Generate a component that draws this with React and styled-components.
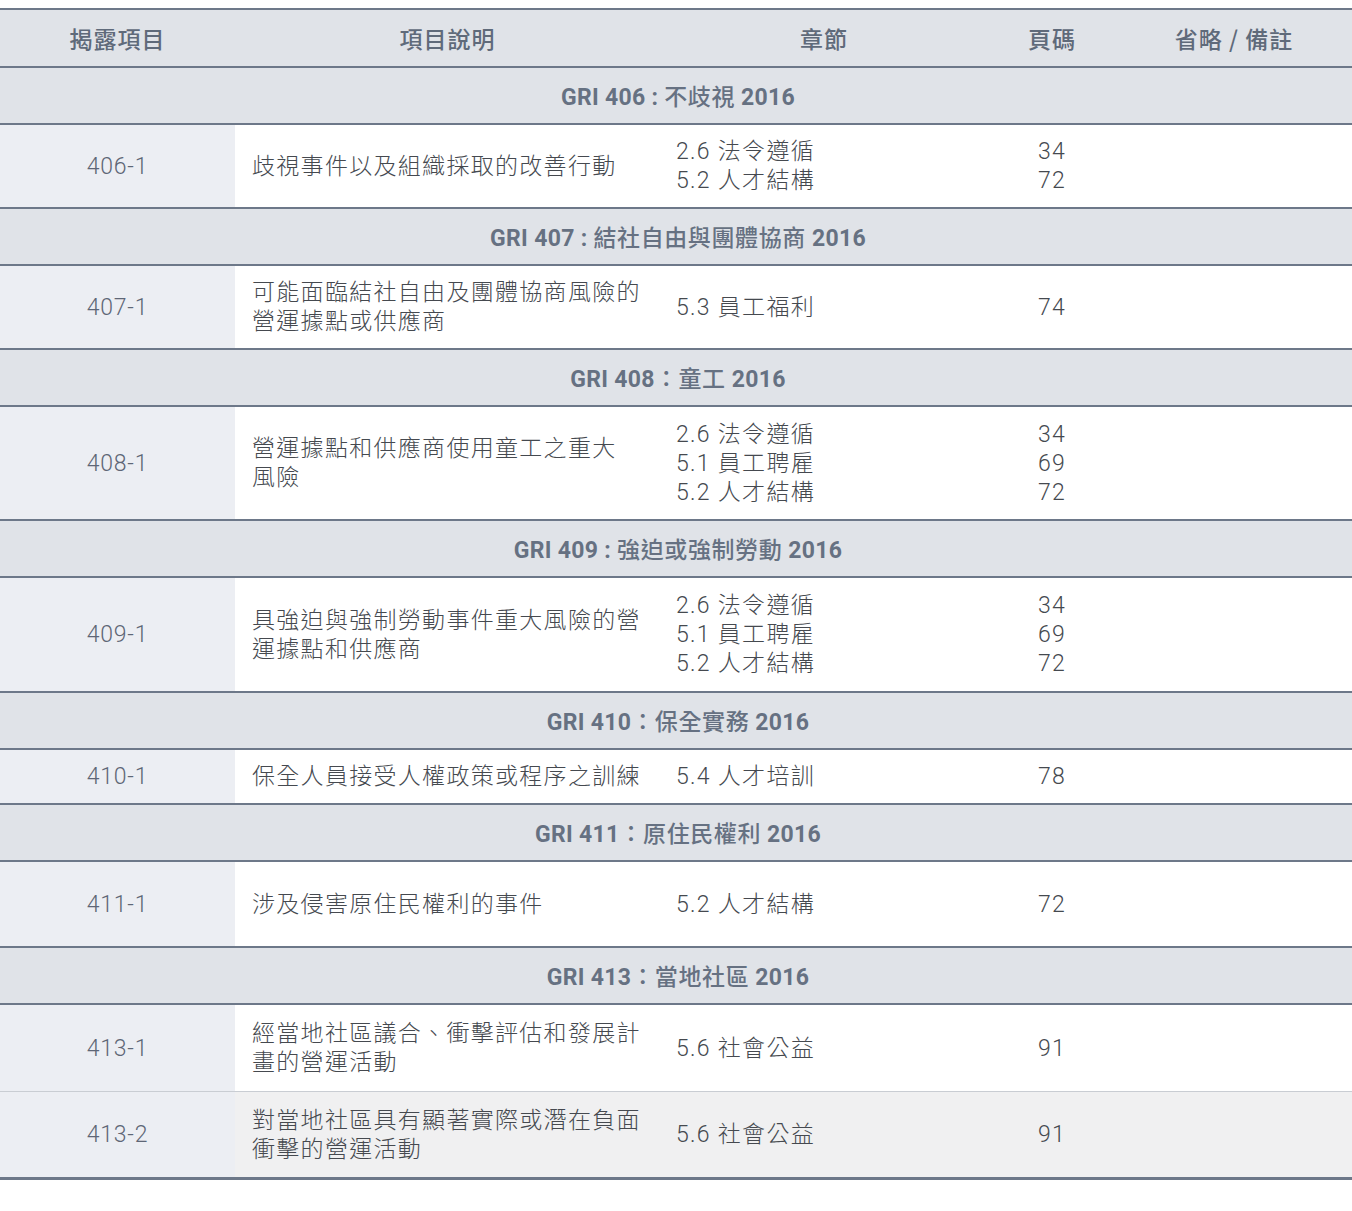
import styled, { createGlobalStyle } from "styled-components";

const GlobalStyle = createGlobalStyle`
  body {
    margin: 0;
    padding-top: 8px;
    background: #ffffff;
    font-family: "Roboto", "Noto Sans CJK TC", sans-serif;
  }
`;

const Table = styled.div`
  width: 1352px;
  border-top: 2px solid #6d7889;
`;

const Row = styled.div`
  display: grid;
  grid-template-columns: 235px 425px 328px 128px 1fr;
  border-bottom: ${(p) =>
    p.$thin ? "1px solid #c9cdd3" : p.$last ? "3px solid #6d7889" : "2px solid #6d7889"};
  min-height: ${(p) => p.$h || 0}px;
  box-sizing: border-box;
  background: ${(p) => (p.$alt ? "#f0f0f1" : "#ffffff")};
`;

const HeadRow = styled(Row)`
  background: #e0e3e8;
  height: 58px;
`;

const HeadCell = styled.div`
  display: flex;
  align-items: center;
  justify-content: center;
  font-family: "Noto Sans CJK TC", sans-serif;
  font-size: 23px;
  font-weight: 500;
  color: #5f6a7a;
  letter-spacing: 1px;
`;

const SectionRow = styled.div`
  display: flex;
  align-items: center;
  justify-content: center;
  height: 55px;
  background: #e0e3e8;
  border-bottom: 2px solid #6d7889;
  font-family: "Roboto", "Noto Sans CJK TC", sans-serif;
  font-size: 23px;
  font-weight: 700;
  color: #667182;
  letter-spacing: 0.3px;
  padding: 0 0 2px 4px;
  box-sizing: border-box;
  height: 57px;
`;

const SectionText = styled.span`
  white-space: pre;
`;

const Cjk = styled.span`
  font-weight: 500;
  letter-spacing: 0.6px;
`;

const CodeCell = styled.div`
  display: flex;
  align-items: center;
  justify-content: center;
  background: #eceef3;
  font-size: 23px;
  font-weight: 300;
  color: #5e6676;
  letter-spacing: 0.8px;
`;

const TextCell = styled.div`
  display: flex;
  flex-direction: column;
  justify-content: center;
  padding: 12px 0 12px ${(p) => p.$pad || 17}px;
  font-family: "Roboto", "Noto Sans CJK TC", sans-serif;
  font-size: 23px;
  font-weight: 300;
  line-height: 29px;
  color: #45494f;
  letter-spacing: 1.3px;
`;

const PageCell = styled(TextCell)`
  align-items: center;
  padding-left: 0;
`;

const Line = styled.span`
  display: block;
  white-space: nowrap;
`;

const sections = [
  {
    title: "GRI 406 : 不歧視 2016",
    rows: [
      {
        code: "406-1",
        desc: ["歧視事件以及組織採取的改善行動"],
        chapters: ["2.6 法令遵循", "5.2 人才結構"],
        pages: ["34", "72"],
        h: 84,
      },
    ],
  },
  {
    title: "GRI 407 : 結社自由與團體協商 2016",
    rows: [
      {
        code: "407-1",
        desc: ["可能面臨結社自由及團體協商風險的", "營運據點或供應商"],
        chapters: ["5.3 員工福利"],
        pages: ["74"],
        h: 84,
      },
    ],
  },
  {
    title: "GRI 408：童工 2016",
    rows: [
      {
        code: "408-1",
        desc: ["營運據點和供應商使用童工之重大", "風險"],
        chapters: ["2.6 法令遵循", "5.1 員工聘雇", "5.2 人才結構"],
        pages: ["34", "69", "72"],
        h: 114,
      },
    ],
  },
  {
    title: "GRI 409 : 強迫或強制勞動 2016",
    rows: [
      {
        code: "409-1",
        desc: ["具強迫與強制勞動事件重大風險的營", "運據點和供應商"],
        chapters: ["2.6 法令遵循", "5.1 員工聘雇", "5.2 人才結構"],
        pages: ["34", "69", "72"],
        h: 115,
      },
    ],
  },
  {
    title: "GRI 410：保全實務 2016",
    rows: [
      {
        code: "410-1",
        desc: ["保全人員接受人權政策或程序之訓練"],
        chapters: ["5.4 人才培訓"],
        pages: ["78"],
        h: 55,
      },
    ],
  },
  {
    title: "GRI 411：原住民權利 2016",
    rows: [
      {
        code: "411-1",
        desc: ["涉及侵害原住民權利的事件"],
        chapters: ["5.2 人才結構"],
        pages: ["72"],
        h: 86,
      },
    ],
  },
  {
    title: "GRI 413：當地社區 2016",
    rows: [
      {
        code: "413-1",
        desc: ["經當地社區議合、衝擊評估和發展計", "畫的營運活動"],
        chapters: ["5.6 社會公益"],
        pages: ["91"],
        h: 87,
        thin: true,
      },
      {
        code: "413-2",
        desc: ["對當地社區具有顯著實際或潛在負面", "衝擊的營運活動"],
        chapters: ["5.6 社會公益"],
        pages: ["91"],
        h: 88,
        alt: true,
        last: true,
      },
    ],
  },
];

// CJK parts of a section title are set in a lighter weight than the Latin parts
const Title = ({ text }) => (
  <SectionText>
    {text
      .split(/([\u3000-\u9fff\uff00-\uffef]+)/)
      .map((part, i) => (i % 2 ? <Cjk key={i}>{part}</Cjk> : part))}
  </SectionText>
);

const App = () => {
  return (
    <>
      <GlobalStyle />
      <Table>
        <HeadRow>
          <HeadCell>揭露項目</HeadCell>
          <HeadCell>項目說明</HeadCell>
          <HeadCell>章節</HeadCell>
          <HeadCell>頁碼</HeadCell>
          <HeadCell>省略 / 備註</HeadCell>
        </HeadRow>
        {sections.map((s) => (
          <div key={s.title}>
            <SectionRow>
              <Title text={s.title} />
            </SectionRow>
            {s.rows.map((r) => (
              <Row key={r.code} $h={r.h} $thin={r.thin} $alt={r.alt} $last={r.last}>
                <CodeCell>{r.code}</CodeCell>
                <TextCell>
                  {r.desc.map((d) => (
                    <Line key={d}>{d}</Line>
                  ))}
                </TextCell>
                <TextCell $pad={16}>
                  {r.chapters.map((c) => (
                    <Line key={c}>{c}</Line>
                  ))}
                </TextCell>
                <PageCell>
                  {r.pages.map((p) => (
                    <Line key={p}>{p}</Line>
                  ))}
                </PageCell>
                <TextCell />
              </Row>
            ))}
          </div>
        ))}
      </Table>
    </>
  );
};

export default App;
